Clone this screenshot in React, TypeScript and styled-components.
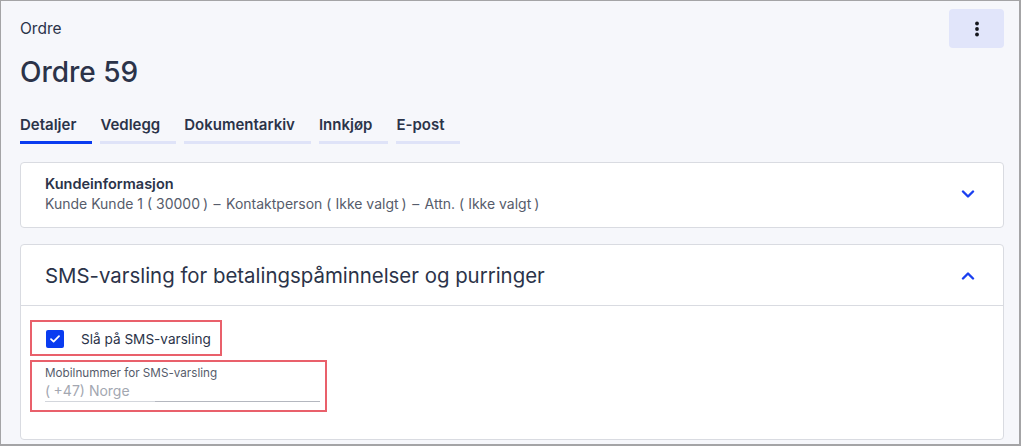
import React from "react";
import styled, { createGlobalStyle } from "styled-components";

const GlobalStyle = createGlobalStyle`
  * { box-sizing: border-box; }
  html, body { margin: 0; padding: 0; background: #ffffff; }
  body { font-family: Inter, "Noto Sans", sans-serif; color: #2b3349; }
`;

const Frame = styled.div`
  width: 1021px;
  height: 446px;
  border: 1px solid #a4a4a6;
  border-right-width: 2px;
  border-bottom-width: 2px;
  background: #f6f7fb;
  padding: 8px 15px 0 19px;
  overflow: hidden;
`;

const Header = styled.header`
  display: flex;
  justify-content: space-between;
  align-items: flex-start;
`;

const HeaderText = styled.div`
  display: flex;
  flex-direction: column;
`;

const Breadcrumb = styled.div`
  margin-top: 10px;
  font-size: 15.5px;
  line-height: 20px;
  color: #2b3349;
`;

const Title = styled.h1`
  margin: 15px 0 0;
  font-size: 28px;
  line-height: 36px;
  font-weight: 500;
  color: #2b3349;
`;

const MenuButton = styled.button`
  width: 55px;
  height: 39px;
  border: none;
  border-radius: 4px;
  background: #e1e5fa;
  display: flex;
  align-items: center;
  justify-content: center;
  padding: 0;
`;

const Tabs = styled.nav`
  display: flex;
  gap: 8px;
  margin-top: 25px;
`;

const Tab = styled.div<{ $active?: boolean }>`
  font-size: 15px;
  line-height: 20px;
  font-weight: 600;
  color: #2b3349;
  padding: 0 16px 6px 0;
  border-bottom: 3px solid ${(p) => (p.$active ? "#0a3cf0" : "#dfe3f8")};
`;

const Card = styled.section`
  background: #ffffff;
  border: 1px solid #d9dbe1;
  border-radius: 4px;
`;

const Stack = styled.div`
  display: flex;
  flex-direction: column;
  gap: 16px;
  margin-top: 18px;
`;

const SummaryRow = styled.div`
  display: flex;
  align-items: center;
  justify-content: space-between;
  padding: 11px 28px 13px 24px;
`;

const SummaryTitle = styled.div`
  font-size: 14.5px;
  line-height: 20px;
  font-weight: 600;
  color: #2b3349;
`;

const SummaryText = styled.div`
  font-size: 14px;
  line-height: 20px;
  color: #565c6b;
  white-space: nowrap;
`;

const Paren = styled.span<{ $close?: boolean }>`
  padding: ${(p) => (p.$close ? "0 0 0 3px" : "0 4px 0 0")};
`;

const Sep = styled.span`
  padding: 0 1.5px;
`;

const SectionHeader = styled.div`
  height: 61px;
  display: flex;
  align-items: center;
  justify-content: space-between;
  padding: 0 28px 0 24px;
  border-bottom: 1px solid #d9dbe1;
`;

const SectionTitle = styled.h2`
  margin: 0;
  font-size: 20.4px;
  font-weight: 400;
  color: #2b3349;
`;

const SectionBody = styled.div`
  display: flex;
  flex-direction: column;
  align-items: flex-start;
  gap: 4px;
  padding: 14px 25px 27px 9px;
`;

const Highlight = styled.div`
  border: 2px solid #e9606b;
`;

const CheckRow = styled(Highlight)`
  height: 36px;
  display: flex;
  align-items: center;
  gap: 17px;
  padding: 1px 9px 0 14px;
`;

const Checkbox = styled.span`
  width: 18px;
  height: 18px;
  border-radius: 2px;
  background: #0a3cf0;
  display: flex;
  align-items: center;
  justify-content: center;
`;

const CheckLabel = styled.span`
  font-size: 13.6px;
  line-height: 20px;
  color: #2b3349;
`;

const FieldBox = styled(Highlight)`
  width: 297px;
  padding: 3px 5px 8px 13px;
`;

const FieldLabel = styled.div`
  font-size: 11.7px;
  line-height: 16px;
  color: #565c6b;
`;

const FieldInputs = styled.div`
  display: flex;
`;

const FieldPart = styled.div<{ $grow?: boolean; $dark?: boolean }>`
  ${(p) => (p.$grow ? "flex: 1;" : "width: 110px;")}
  height: 21px;
  font-size: 14px;
  line-height: 19px;
  color: #a3a7b1;
  white-space: nowrap;
  border-bottom: 1px solid ${(p) => (p.$dark ? "#b4b7bf" : "#d3d6dc")};
`;

const ValueParen = styled.span`
  padding-right: 3.5px;
`;

const Chevron = ({ up }: { up?: boolean }) => (
  <svg width="14" height="9" viewBox="0 0 14 9" fill="none">
    <polyline
      points={up ? "2,7.5 7,2.5 12,7.5" : "2,1.5 7,6.5 12,1.5"}
      stroke="#1a3ff0"
      strokeWidth="2.4"
      strokeLinecap="round"
      strokeLinejoin="round"
    />
  </svg>
);

const Dots = () => (
  <svg width="6" height="16" viewBox="0 0 6 16">
    <circle cx="3" cy="2.5" r="1.9" fill="#14161c" />
    <circle cx="3" cy="8" r="1.9" fill="#14161c" />
    <circle cx="3" cy="13.5" r="1.9" fill="#14161c" />
  </svg>
);

const Check = () => (
  <svg width="12" height="10" viewBox="0 0 12 10" fill="none">
    <polyline points="2,5.2 4.6,7.6 10,2.2" stroke="#ffffff" strokeWidth="1.8" strokeLinecap="round" strokeLinejoin="round" />
  </svg>
);

const tabs = ["Detaljer", "Vedlegg", "Dokumentarkiv", "Innkjøp", "E-post"];

const Bracketed = ({ children }: { children: React.ReactNode }) => (
  <>
    <Paren>(</Paren>
    {children}
    <Paren $close>)</Paren>
  </>
);

export default function App() {
  return (
    <>
      <GlobalStyle />
      <Frame>
        <Header>
          <HeaderText>
            <Breadcrumb>Ordre</Breadcrumb>
            <Title>Ordre 59</Title>
          </HeaderText>
          <MenuButton aria-label="Mer">
            <Dots />
          </MenuButton>
        </Header>
        <Tabs>
          {tabs.map((t, i) => (
            <Tab key={t} $active={i === 0}>
              {t}
            </Tab>
          ))}
        </Tabs>
        <Stack>
          <Card>
            <SummaryRow>
              <div>
                <SummaryTitle>Kundeinformasjon</SummaryTitle>
                <SummaryText>
                  Kunde Kunde 1 <Bracketed>30000</Bracketed>
                  <Sep> – </Sep>
                  Kontaktperson <Bracketed>Ikke valgt</Bracketed>
                  <Sep> – </Sep>
                  Attn. <Bracketed>Ikke valgt</Bracketed>
                </SummaryText>
              </div>
              <Chevron />
            </SummaryRow>
          </Card>
          <Card>
            <SectionHeader>
              <SectionTitle>SMS-varsling for betalingspåminnelser og purringer</SectionTitle>
              <Chevron up />
            </SectionHeader>
            <SectionBody>
              <CheckRow>
                <Checkbox>
                  <Check />
                </Checkbox>
                <CheckLabel>Slå på SMS-varsling</CheckLabel>
              </CheckRow>
              <FieldBox>
                <FieldLabel>Mobilnummer for SMS-varsling</FieldLabel>
                <FieldInputs>
                  <FieldPart>
                    <ValueParen>(</ValueParen>+47) Norge
                  </FieldPart>
                  <FieldPart $grow $dark />
                </FieldInputs>
              </FieldBox>
            </SectionBody>
          </Card>
        </Stack>
      </Frame>
    </>
  );
}
